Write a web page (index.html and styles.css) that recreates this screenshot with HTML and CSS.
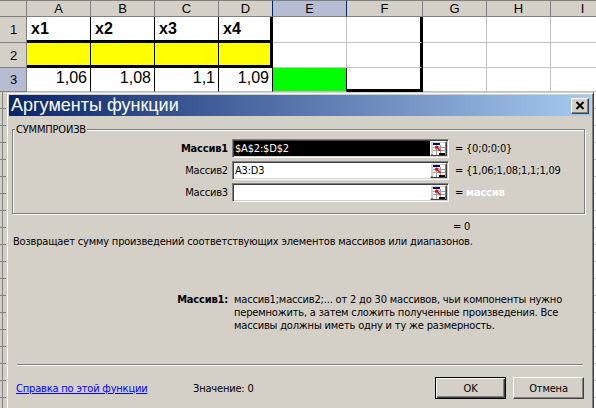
FILE: index.html
```html
<!DOCTYPE html>
<html lang="ru">
<head>
<meta charset="utf-8">
<title>Аргументы функции</title>
<link rel="stylesheet" href="styles.css">
</head>
<body>
<div class="sheet">
  <div class="ch corner"></div>
  <div class="ch">A</div>
  <div class="ch">B</div>
  <div class="ch">C</div>
  <div class="ch">D</div>
  <div class="ch sel">E</div>
  <div class="ch">F</div>
  <div class="ch">G</div>
  <div class="ch">H</div>
  <div class="ch">I</div>

  <div class="rh">1</div>
  <div class="c t1">x1</div>
  <div class="c t1">x2</div>
  <div class="c t1">x3</div>
  <div class="c t1 dlast">x4</div>
  <div class="c"></div>
  <div class="c fcol"></div>
  <div class="c"></div>
  <div class="c"></div>
  <div class="c"></div>

  <div class="rh">2</div>
  <div class="c t2"></div>
  <div class="c t2"></div>
  <div class="c t2"></div>
  <div class="c t2 dlast"></div>
  <div class="c"></div>
  <div class="c fcol"></div>
  <div class="c"></div>
  <div class="c"></div>
  <div class="c"></div>

  <div class="rh sel">3</div>
  <div class="c t3">1,06</div>
  <div class="c t3">1,08</div>
  <div class="c t3">1,1</div>
  <div class="c t3">1,09</div>
  <div class="c green"></div>
  <div class="c fcol fbot"></div>
  <div class="c"></div>
  <div class="c"></div>
  <div class="c"></div>
</div>
<div class="lower">
  <div class="lower-rh"></div>
  <div class="lower-cells"></div>
</div>

<div class="dialog">
  <div class="titlebar">
    <span class="title">Аргументы функции</span>
    <span class="close">
      <svg width="10" height="9" viewBox="0 0 10 9"><path d="M1.5 1 L8.5 8 M8.5 1 L1.5 8" stroke="#000" stroke-width="2" fill="none"/></svg>
    </span>
  </div>

  <div class="group">
    <div class="group-title">СУММПРОИЗВ</div>
    <div class="args">
      <div class="alabel bold">Массив1</div>
      <div class="field"><div class="ftext selected">$A$2:$D$2</div><div class="fbtn"><svg class="pick" width="12" height="12" viewBox="0 0 12 12"><rect x="0" y="0" width="12" height="12" fill="#fff"/><rect x="0" y="0" width="7" height="2" fill="#000080"/><path d="M0 4.5H12M0 7.5H12M3.5 2V12M7.5 2V12" stroke="#a0a0a0" stroke-width="1"/><path d="M2 3 L6 3 L4.8 4.2 L8 7.4 L6.9 8.5 L3.7 5.3 L2.5 6.5 Z" fill="#f00"/><rect x="6" y="10" width="6" height="2" fill="#000"/></svg></div></div>
      <div class="eq">=</div>
      <div class="aval">{0;0;0;0}</div>

      <div class="alabel">Массив2</div>
      <div class="field"><div class="ftext">A3:D3</div><div class="fbtn"><svg class="pick" width="12" height="12" viewBox="0 0 12 12"><rect x="0" y="0" width="12" height="12" fill="#fff"/><rect x="0" y="0" width="7" height="2" fill="#000080"/><path d="M0 4.5H12M0 7.5H12M3.5 2V12M7.5 2V12" stroke="#a0a0a0" stroke-width="1"/><path d="M2 3 L6 3 L4.8 4.2 L8 7.4 L6.9 8.5 L3.7 5.3 L2.5 6.5 Z" fill="#f00"/><rect x="6" y="10" width="6" height="2" fill="#000"/></svg></div></div>
      <div class="eq">=</div>
      <div class="aval">{1,06;1,08;1,1;1,09</div>

      <div class="alabel">Массив3</div>
      <div class="field"><div class="ftext"></div><div class="fbtn"><svg class="pick" width="12" height="12" viewBox="0 0 12 12"><rect x="0" y="0" width="12" height="12" fill="#fff"/><rect x="0" y="0" width="7" height="2" fill="#000080"/><path d="M0 4.5H12M0 7.5H12M3.5 2V12M7.5 2V12" stroke="#a0a0a0" stroke-width="1"/><path d="M2 3 L6 3 L4.8 4.2 L8 7.4 L6.9 8.5 L3.7 5.3 L2.5 6.5 Z" fill="#f00"/><rect x="6" y="10" width="6" height="2" fill="#000"/></svg></div></div>
      <div class="eq">=</div>
      <div class="aval hint">массив</div>
    </div>
  </div>

  <div class="result">= 0</div>
  <div class="desc">Возвращает сумму произведений соответствующих элементов массивов или диапазонов.</div>

  <div class="help">
    <div class="hlabel">Массив1:</div>
    <div class="htext">массив1;массив2;... от 2 до 30 массивов, чьи компоненты нужно<br>перемножить, а затем сложить полученные произведения. Все<br>массивы должны иметь одну и ту же размерность.</div>
  </div>

  <div class="separator"></div>

  <div class="footer">
    <div class="linkcell"><a class="link" href="#">Справка по этой функции</a></div>
    <div class="value">Значение: 0</div>
    <div class="btn default">OK</div>
    <div class="btn">Отмена</div>
  </div>
</div>
</body>
</html>
```

FILE: styles.css
```css
* { box-sizing: border-box; }
html, body { margin: 0; padding: 0; }
body {
  width: 596px;
  height: 408px;
  overflow: hidden;
  position: relative;
  background: #fff;
  font-family: "Liberation Sans", Arial, sans-serif;
}

/* ---------- spreadsheet ---------- */
.sheet {
  display: grid;
  grid-template-columns: 27px 64px 64px 64px 54px 74px 76px 64px 64px 64px;
  grid-template-rows: 17px 26px 25px 24px;
  width: 615px;
}
.ch {
  background: #d4d0c8;
  border-right: 1px solid #808080;
  border-bottom: 1px solid #808080;
  border-top: 1px solid #808080;
  font-size: 13px;
  line-height: 15px;
  text-align: center;
  color: #000;
}
.ch.sel {
  background: #b6bdd2;
  border-right-color: #0a246a;
  border-left: 1px solid #0a246a;
  margin-left: -1px;
}
.rh {
  background: #d4d0c8;
  border-right: 1px solid #808080;
  border-bottom: 1px solid #808080;
  font-size: 13px;
  display: flex;
  align-items: center;
  padding-left: 10px;
}
.rh.sel { background: #b6bdd2; }
.c {
  border-right: 1px solid #c0c0c0;
  border-bottom: 1px solid #c0c0c0;
  font-size: 16px;
  display: flex;
  align-items: flex-end;
  padding: 0 3px 3px 4px;
  color: #000;
  white-space: nowrap;
}
.t1 {
  font-weight: bold;
  border-right-color: #000;
  border-bottom: 3px solid #000;
  padding-bottom: 2px;
}
.t2 {
  background: #ffff00;
  border-right-color: #000;
  border-bottom: 3px solid #000;
}
.dlast { border-right: 3px solid #000; }
.t3 {
  border-right-color: #000;
  justify-content: flex-end;
  padding-bottom: 4px;
}
.green {
  background: #00ff00;
  border-right-color: #000;
}
.fcol { border-right: 3px solid #000; }
.fbot { border-bottom: 3px solid #000; }

.lower {
  display: grid;
  grid-template-columns: 27px 1fr;
  height: 316px;
}
.lower-rh {
  background:
    repeating-linear-gradient(to bottom, transparent 0 16px, #808080 16px 17px),
    linear-gradient(to right, #d4d0c8 2px, #808080 2px 3px, #d4d0c8 3px);
}
.lower-cells {
  background: repeating-linear-gradient(to bottom, #fff 0 16px, #c0c0c0 16px 17px);
}

/* ---------- dialog ---------- */
.dialog {
  position: absolute;
  left: 6px;
  top: 92px;
  width: 588px;
  height: 330px;
  background: #d4d0c8;
  border: 1px solid;
  border-color: #d4d0c8 #404040 #404040 #d4d0c8;
  box-shadow: inset 1px 1px #fff, inset -1px -1px #808080;
  padding: 2px;
  font-family: "DejaVu Sans Condensed", "Liberation Sans", sans-serif;
  font-size: 11px;
  letter-spacing: -0.18px;
  color: #000;
  display: flex;
  flex-direction: column;
}
.titlebar {
  height: 21px;
  flex: none;
  background: linear-gradient(to right, #0a246a, #a6caf0);
  display: flex;
  align-items: center;
  padding: 0 2px;
}
.title {
  font-family: "Liberation Sans", Arial, sans-serif;
  font-size: 18px;
  letter-spacing: 0;
  line-height: 21px;
  color: #fff;
  white-space: nowrap;
}
.close {
  margin-left: auto;
  width: 18px;
  height: 16px;
  background: #d4d0c8;
  border: 1px solid;
  border-color: #fff #404040 #404040 #fff;
  box-shadow: inset -1px -1px #808080;
  display: flex;
  align-items: center;
  justify-content: center;
}
.close svg { display: block; }

.group {
  margin: 13px 6px 0 3px;
  border: 1px solid #808080;
  box-shadow: inset 1px 1px #fff, 1px 1px #fff;
  padding: 0 0 11px 0;
  flex: none;
}
.group-title {
  margin: -7px 0 0 2px;
  padding: 0 1px;
  width: fit-content;
  background: #d4d0c8;
  line-height: 13px;
}
.args {
  margin-top: 3px;
  display: grid;
  grid-template-columns: 215px 217px 9px 1fr;
  grid-auto-rows: 19px;
  column-gap: 4px;
  row-gap: 3px;
  align-items: center;
}
.alabel { text-align: right; white-space: nowrap; }
.bold { font-weight: bold; }
.field {
  height: 19px;
  display: flex;
  border: 1px solid;
  border-color: #808080 #fff #fff #808080;
  box-shadow: inset 1px 1px #404040, inset -1px -1px #d4d0c8;
  background: #fff;
  padding: 1px;
}
.ftext {
  flex: 1;
  line-height: 15px;
  padding-left: 1px;
  white-space: nowrap;
  overflow: hidden;
}
.ftext.selected { background: #000; color: #fff; }
.fbtn {
  width: 17px;
  height: 15px;
  flex: none;
  background: #d4d0c8;
  border: 1px solid;
  border-color: #fff #404040 #404040 #fff;
  box-shadow: inset -1px -1px #808080;
  display: flex;
  align-items: center;
  justify-content: center;
}
.pick { display: block; }
.eq { padding-left: 2px; }
.aval { white-space: nowrap; overflow: hidden; }
.aval.hint { color: #fff; font-weight: bold; }

.result {
  margin-top: 6px;
  padding-left: 444px;
  line-height: 13px;
}
.desc {
  margin-top: 2px;
  padding-left: 4px;
  line-height: 13px;
  white-space: nowrap;
}
.help {
  margin-top: 45px;
  display: grid;
  grid-template-columns: 219px 1fr;
  column-gap: 6px;
  line-height: 13px;
}
.hlabel { text-align: right; font-weight: bold; }
.htext { white-space: nowrap; }

.separator {
  margin: 32px 8px 0 8px;
  height: 2px;
  border-top: 1px solid #808080;
  border-bottom: 1px solid #fff;
  flex: none;
}
.footer {
  margin: 11px 7px 0 7px;
  height: 22px;
  display: flex;
  align-items: center;
}
.linkcell { width: 177px; flex: none; }
.link { color: #0000ff; text-decoration: underline; }
.value { flex: 1; white-space: nowrap; }
.btn {
  width: 71px;
  height: 22px;
  margin-left: 7px;
  display: flex;
  align-items: center;
  justify-content: center;
  border: 1px solid;
  border-color: #fff #404040 #404040 #fff;
  box-shadow: inset -1px -1px #808080;
  background: #d4d0c8;
}
.btn.default {
  margin-left: 0;
  border-color: #000;
  box-shadow: inset 1px 1px #fff, inset -1px -1px #404040, inset -2px -2px #808080;
}
```
